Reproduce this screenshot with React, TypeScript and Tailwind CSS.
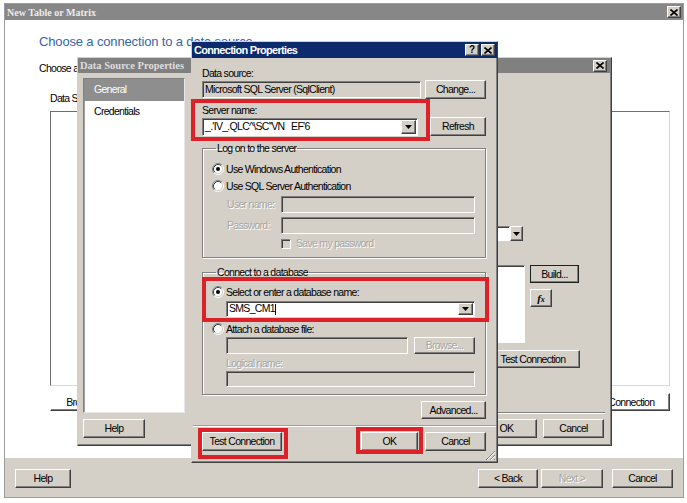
import type { ReactNode } from "react";

// ── Shared classic-Windows bits ───────────────────────────────────────────────

const UI = "font-['Liberation_Sans',Arial,sans-serif] tracking-[-0.7px]";

function Btn({
  className = "",
  bg = "bg-[#d4d0c8]",
  disabled = false,
  children,
}: {
  className?: string;
  bg?: string;
  disabled?: boolean;
  children?: ReactNode;
}) {
  return (
    <div
      className={`flex items-center justify-center shrink-0 ${bg} border border-t-white border-l-white border-r-[#404040] border-b-[#404040] shadow-[inset_-1px_-1px_0_#808080] text-[10.5px] leading-none whitespace-nowrap overflow-hidden
        ${disabled ? "text-[#a6a6a6] [text-shadow:1px_1px_0_#fff]" : "text-black"} ${className}`}
    >
      {children}
    </div>
  );
}

function Field({
  className = "",
  gray = false,
  children,
}: {
  className?: string;
  gray?: boolean;
  children?: ReactNode;
}) {
  return (
    <div
      className={`flex items-center shrink-0 border border-t-[#808080] border-l-[#808080] border-r-white border-b-white shadow-[inset_1px_1px_0_#404040] text-[10.5px] leading-none whitespace-nowrap overflow-hidden
        ${gray ? "bg-[#d4d0c8]" : "bg-white"} ${className}`}
    >
      {children}
    </div>
  );
}

function DownArrow({ className = "w-[15px]" }: { className?: string }) {
  return (
    <Btn className={`h-full ${className}`}>
      <svg width="7" height="4" viewBox="0 0 7 4">
        <path d="M0 0h7L3.5 4z" fill="#000" />
      </svg>
    </Btn>
  );
}

function Radio({ checked = false }: { checked?: boolean }) {
  return (
    <svg width="12" height="12" viewBox="0 0 12 12" className="shrink-0">
      <circle cx="6" cy="6" r="4.5" fill="#fff" />
      <path d="M2.11 9.89A5.5 5.5 0 0 1 9.89 2.11" fill="none" stroke="#808080" />
      <path d="M9.89 2.11A5.5 5.5 0 0 1 2.11 9.89" fill="none" stroke="#fff" />
      <path d="M2.82 9.18A4.5 4.5 0 0 1 9.18 2.82" fill="none" stroke="#404040" />
      <path d="M9.18 2.82A4.5 4.5 0 0 1 2.82 9.18" fill="none" stroke="#d4d0c8" />
      {checked && <circle cx="6" cy="6" r="2" fill="#000" />}
    </svg>
  );
}

function CloseGlyph() {
  return (
    <svg width="8" height="7" viewBox="0 0 8 7">
      <path d="M0.5 0.5l7 6M7.5 0.5l-7 6" stroke="#000" strokeWidth="1.6" />
    </svg>
  );
}

function TitleBtn({ children }: { children: ReactNode }) {
  return (
    <div className="flex items-center justify-center w-[14px] h-[12px] bg-[#d4d0c8] border border-t-white border-l-white border-r-[#404040] border-b-[#404040] shadow-[inset_-1px_-1px_0_#808080] text-[10px] font-bold leading-none tracking-normal text-black">
      {children}
    </div>
  );
}

const Disabled = "whitespace-nowrap text-[#a6a6a6] [text-shadow:1px_1px_0_#fff]";

// ── Background wizard ─────────────────────────────────────────────────────────

function WizardWindow() {
  return (
    <div className={`absolute left-[4px] top-[3px] w-[680px] h-[495px] flex flex-col border border-[#9c9c9c] bg-white text-[10.5px] ${UI}`}>
      <div className="h-[16px] shrink-0 flex items-center justify-between bg-[#878787] pl-[2px] pr-[2px]">
        <span className="font-['Liberation_Serif',serif] font-bold text-[10px] tracking-normal text-[#ececec]">New Table or Matrix</span>
        <TitleBtn>
          <CloseGlyph />
        </TitleBtn>
      </div>

      <div className="flex-1 flex flex-col pl-[34px]">
        <div className="mt-[14px] h-[15px] leading-[15px] text-[13px] tracking-[-0.15px] text-[#3566a8] whitespace-nowrap">
          Choose a connection to a data source
        </div>
        <div className="mt-[13px] h-[12px] leading-[12px] whitespace-nowrap">
          Choose an existing data source connection
        </div>
        <div className="mt-[18px] ml-[11px] h-[12px] leading-[12px] whitespace-nowrap">
          Data Source Connections:
        </div>
        <div className="mt-[7px] ml-[11px] w-[620px] h-[275px] bg-white border border-t-[#6e6e6e] border-l-[#6e6e6e] border-r-[#d6d6d6] border-b-[#d6d6d6]" />
        <div className="mt-[7px] ml-[11px] w-[620px] h-[18px] flex justify-between">
          <Btn bg="bg-white" className="w-[70px]">Browse...</Btn>
          <Btn bg="bg-white" className="w-[96px]">Test Connection</Btn>
        </div>
      </div>

      <div className="h-[39px] shrink-0 flex items-start bg-[#d4d0c8] pt-[11px] px-[10px]">
        <Btn className="w-[56px] h-[19px]">Help</Btn>
        <Btn className="ml-auto w-[60px] h-[19px]">&lt; Back</Btn>
        <Btn disabled className="ml-[3px] w-[62px] h-[19px]">Next &gt;</Btn>
        <Btn className="ml-[9px] w-[61px] h-[19px]">Cancel</Btn>
      </div>
    </div>
  );
}

// ── Data Source Properties ────────────────────────────────────────────────────

function DataSourceWindow() {
  return (
    <div className={`absolute left-[77px] top-[57px] w-[535px] h-[389px] flex flex-col bg-[#d4d0c8] border border-t-[#d4d0c8] border-l-[#d4d0c8] border-r-[#404040] border-b-[#404040] shadow-[inset_-1px_-1px_0_#808080] ${UI}`}>
      <div className="h-[15px] shrink-0 flex items-center justify-between bg-[#808080] pl-[2px] pr-[4px]">
        <span className="font-['Liberation_Serif',serif] font-bold text-[10.5px] tracking-normal text-[#dedede]">Data Source Properties</span>
        <TitleBtn>
          <CloseGlyph />
        </TitleBtn>
      </div>

      <div className="flex-1 flex pt-[5px] pl-[5px] pr-[6px] text-[10.5px]">
        {/* nav */}
        <div className="flex flex-col">
          <div className="w-[102px] h-[335px] bg-white border border-t-[#808080] border-l-[#808080] border-r-[#e8e8e8] border-b-[#e8e8e8] shadow-[inset_1px_1px_0_#a0a0a0]">
            <div className="h-[22px] flex items-center pl-[10px] bg-[#8e8e8e] text-white">General</div>
            <div className="h-[22px] flex items-center pl-[10px]">Credentials</div>
          </div>
          <Btn className="mt-[6px] w-[62px] h-[19px]">Help</Btn>
        </div>

        {/* page */}
        <div className="ml-[6px] flex-1 flex flex-col">
          <div className="mt-[148px] ml-[109px] w-[223px] h-[15px] flex">
            <Field className="flex-1 h-full" />
            <DownArrow className="w-[13px]" />
          </div>
          <div className="mt-[24px] flex">
            <Field className="ml-[109px] w-[225px] h-[78px]" />
            <div className="ml-[5px] flex flex-col">
              <Btn className="w-[49px] h-[18px] outline outline-1 outline-[#202020] -outline-offset-1">Build...</Btn>
              <Btn className="mt-[6px] w-[22px] h-[18px]">
                <span className="font-['Liberation_Serif',serif] italic font-bold text-[11px] tracking-normal">
                  f<span className="text-[8px]">x</span>
                </span>
              </Btn>
            </div>
          </div>
          <Btn className="mt-[7px] ml-[295px] w-[94px] h-[18px]">Test Connection</Btn>
          <div className="mt-[44px] h-[2px] border-t border-t-[#808080] border-b border-b-white" />
          <div className="mt-[5px] flex">
            <Btn className="ml-[285px] w-[61px] h-[19px]">OK</Btn>
            <Btn className="ml-[6px] w-[61px] h-[19px]">Cancel</Btn>
          </div>
        </div>
      </div>
    </div>
  );
}

// ── Connection Properties ─────────────────────────────────────────────────────

function Group({ title, className = "", children }: { title: string; className?: string; children: ReactNode }) {
  return (
    <fieldset className={`border border-[#808080] shadow-[inset_1px_1px_0_#fff,1px_1px_0_#fff] pl-[9px] pr-[10px] ${className}`}>
      <legend className="ml-[4px] px-[1px] h-[11px] leading-[11px] text-[10.5px]">{title}</legend>
      {children}
    </fieldset>
  );
}

function ConnectionWindow() {
  return (
    <div className={`absolute left-[191px] top-[41px] w-[307px] h-[422px] flex flex-col bg-[#d4d0c8] border border-t-[#d4d0c8] border-l-[#d4d0c8] border-r-[#404040] border-b-[#404040] shadow-[inset_-1px_-1px_0_#808080] text-[10.5px] leading-none text-black ${UI}`}>
      <div className="h-[16px] shrink-0 flex items-center justify-between bg-[#0c2a6c] pl-[2px] pr-[2px]">
        <span className="font-bold text-[11px] text-white">Connection Properties</span>
        <div className="flex gap-[2px]">
          <TitleBtn>?</TitleBtn>
          <TitleBtn>
            <CloseGlyph />
          </TitleBtn>
        </div>
      </div>

      <div className="flex-1 flex flex-col pl-[10px] pr-[11px]">
        <div className="mt-[10px] h-[11px] leading-[11px]">Data source:</div>
        <div className="mt-[1px] h-[19px] flex items-center justify-between">
          <Field gray className="w-[219px] h-[17px] pl-[2px]">Microsoft SQL Server (SqlClient)</Field>
          <Btn className="w-[61px] h-[19px]">Change...</Btn>
        </div>

        <div className="mt-[6px] h-[11px] leading-[11px]">Server name:</div>
        <div className="mt-[1px] h-[19px] flex items-center justify-between">
          <Field className="w-[216px] h-[18px] pl-[2px]">
            <span className="flex-1">_.'IV_.QLC^\SC''VN&nbsp;&nbsp;&nbsp;EF'6</span>
            <div className="h-full py-[1px] pr-[1px]">
              <DownArrow />
            </div>
          </Field>
          <Btn className="w-[56px] h-[19px]">Refresh</Btn>
        </div>

        <Group title="Log on to the server" className="mt-[7px] pb-[8px]">
          <div className="mt-[9px] h-[12px] flex items-center gap-[2px]">
            <Radio checked />
            <span className="whitespace-nowrap">Use Windows Authentication</span>
          </div>
          <div className="mt-[5px] h-[12px] flex items-center gap-[2px]">
            <Radio />
            <span className="whitespace-nowrap">Use SQL Server Authentication</span>
          </div>
          <div className="mt-[4px] h-[17px] flex items-center pl-[15px]">
            <span className={`w-[54px] shrink-0 ${Disabled}`}>User name:</span>
            <Field gray className="flex-1 h-[17px]" />
          </div>
          <div className="mt-[4px] h-[17px] flex items-center pl-[15px]">
            <span className={`w-[54px] shrink-0 ${Disabled}`}>Password:</span>
            <Field gray className="flex-1 h-[17px]" />
          </div>
          <div className="mt-[4px] h-[11px] flex items-center pl-[69px] gap-[5px]">
            <Field gray className="w-[10px] h-[10px]" />
            <span className={Disabled}>Save my password</span>
          </div>
        </Group>

        <Group title="Connect to a database" className="mt-[9px] pb-[7px]">
          <div className="mt-[8px] h-[12px] flex items-center gap-[2px]">
            <Radio checked />
            <span className="whitespace-nowrap">Select or enter a database name:</span>
          </div>
          <div className="mt-[3px] pl-[14px]">
            <Field className="w-full h-[16px] pl-[2px]">
              <span className="flex-1">
                SMS_CM1<span className="inline-block w-[1px] h-[11px] align-middle bg-black" />
              </span>
              <div className="h-full py-[1px] pr-[1px]">
                <DownArrow />
              </div>
            </Field>
          </div>
          <div className="mt-[6px] h-[12px] flex items-center gap-[2px]">
            <Radio />
            <span className="whitespace-nowrap">Attach a database file:</span>
          </div>
          <div className="mt-[2px] h-[17px] pl-[14px] flex items-center gap-[6px]">
            <Field gray className="flex-1 h-[17px]" />
            <Btn disabled className="w-[61px] h-[17px]">Browse...</Btn>
          </div>
          <div className={`mt-[4px] h-[11px] leading-[11px] pl-[14px] ${Disabled}`}>Logical name:</div>
          <div className="mt-[2px] pl-[14px]">
            <Field gray className="w-full h-[16px]" />
          </div>
        </Group>

        <div className="mt-[6px] flex justify-end">
          <Btn className="w-[65px] h-[18px]">Advanced...</Btn>
        </div>

        <div className="mt-[6px] -ml-[9px] -mr-[10px] h-[2px] border-t border-t-[#a0a0a0] border-b border-b-white" />

        <div className="mt-[5px] h-[19px] flex">
          <Btn className="w-[80px] h-[19px]">Test Connection</Btn>
          <Btn className="ml-auto w-[57px] h-[19px]">OK</Btn>
          <Btn className="ml-[7px] w-[61px] h-[19px]">Cancel</Btn>
        </div>
      </div>

      {/* size grip */}
      <svg className="absolute right-[1px] bottom-[1px]" width="12" height="12" viewBox="0 0 12 12">
        <path d="M11 2L2 11M11 6L6 11M11 10L10 11" stroke="#808080" />
        <path d="M11 3L3 11M11 7L7 11" stroke="#fff" />
      </svg>

      {/* red annotation boxes */}
      <div className="absolute left-[-1px] top-[57px] w-[239px] h-[42px] border-[4px] border-[#dc2228]" />
      <div className="absolute left-[10px] top-[235px] w-[287px] h-[45px] border-[4px] border-[#dc2228]" />
      <div className="absolute left-[6px] top-[386px] w-[90px] h-[31px] border-[4px] border-[#dc2228]" />
      <div className="absolute left-[164px] top-[385px] w-[67px] h-[27px] border-[4px] border-[#dc2228]" />
    </div>
  );
}

export default function App() {
  return (
    <div className="relative w-[687px] h-[503px] overflow-hidden bg-white">
      <WizardWindow />
      <DataSourceWindow />
      <ConnectionWindow />
    </div>
  );
}
